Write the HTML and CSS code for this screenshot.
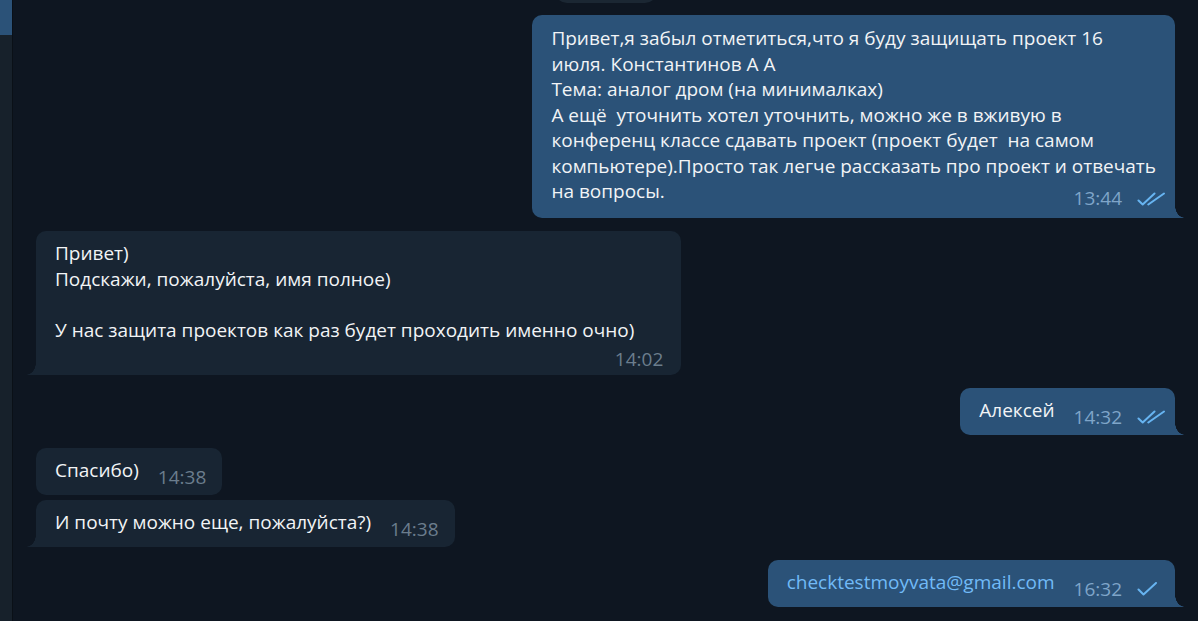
FILE: index.html
```html
<!DOCTYPE html>
<html lang="ru">
<head>
<meta charset="utf-8">
<title>Chat</title>
<link rel="stylesheet" href="styles.css">
</head>
<body>
<aside class="sidebar">
  <div class="sb-active"></div>
  <div class="sb-rest"></div>
</aside>
<main class="chat">
  <div class="messages">
    <div class="date-pill"></div>

    <div class="msg out tail long">
      <span class="text">Привет,я забыл отметиться,что я буду защищать проект 16<br>июля. Константинов А А<br>Тема: аналог дром (на минималках)<br>А ещё&nbsp; уточнить хотел уточнить, можно же в вживую в<br>конференц классе сдавать проект (проект будет&nbsp; на самом<br>компьютере).Просто так легче рассказать про проект и отвечать<br>на вопросы.</span>
      <span class="meta"><span class="time">13:44</span><svg class="check" viewBox="0 0 28 14" width="28" height="14"><path d="M1.5 8.5 L5.7 12.5 L17.5 1.5 M11.3 12.5 L27 1.5" /></svg></span>
    </div>

    <div class="msg in tail wide">
      <span class="text">Привет)<br>Подскажи, пожалуйста, имя полное)<br><br>У нас защита проектов как раз будет проходить именно очно)</span>
      <span class="meta row"><span class="time">14:02</span></span>
    </div>

    <div class="msg out tail">
      <span class="text">Алексей</span>
      <span class="meta"><span class="time">14:32</span><svg class="check" viewBox="0 0 28 14" width="28" height="14"><path d="M1.5 8.5 L5.7 12.5 L17.5 1.5 M11.3 12.5 L27 1.5" /></svg></span>
    </div>

    <div class="msg in">
      <span class="text">Спасибо)</span>
      <span class="meta"><span class="time">14:38</span></span>
    </div>

    <div class="msg in tail grouped">
      <span class="text">И почту можно еще, пожалуйста?)</span>
      <span class="meta"><span class="time">14:38</span></span>
    </div>

    <div class="msg out tail">
      <span class="text link">checktestmoyvata@gmail.com</span>
      <span class="meta"><span class="time">16:32</span><svg class="check" viewBox="0 0 28 14" width="28" height="14"><path d="M1.5 7.5 L6.5 12.5 L19 1" /></svg></span>
    </div>
  </div>
</main>
</body>
</html>
```

FILE: styles.css
```css
* { box-sizing: border-box; }

html, body {
  margin: 0;
  height: 100%;
}

body {
  display: flex;
  background: #0e1621;
  font-family: "Open Sans", "Noto Sans", sans-serif;
  color: #f2f4f6;
  overflow: hidden;
}

.sidebar {
  width: 13px;
  flex: none;
  display: flex;
  flex-direction: column;
  border-right: 1px solid #0a1017;
}

.sb-active {
  height: 35px;
  background: #2b5278;
}

.sb-rest {
  flex: 1;
  background: #17212b;
}

.chat {
  flex: 1;
  min-width: 0;
}

.messages {
  display: flex;
  flex-direction: column;
  padding: 0 23px 0 23px;
}

.date-pill {
  align-self: center;
  width: 102px;
  height: 24px;
  margin-top: -21px;
  margin-bottom: -1px;
  border-radius: 12px;
  background: #1b2733;
}

.msg {
  position: relative;
  display: flow-root;
  margin-top: 13px;
  padding: 10px 19px 4.5px 19px;
  border-radius: 10px;
  font-size: 19px;
  line-height: 25.5px;
}

.msg.grouped {
  margin-top: 5px;
}

.msg.long {
  padding-top: 11px;
  padding-bottom: 6.5px;
}

.msg.wide {
  padding-right: 47px;
}

.out {
  align-self: flex-end;
  background: #2b5278;
}

.in {
  align-self: flex-start;
  background: #182533;
}

.text {
  white-space: nowrap;
}

.link {
  color: #71baf7;
}

.meta {
  float: right;
  display: flex;
  align-items: center;
  gap: 15px;
  margin-top: 7px;
  margin-left: 19px;
  height: 25.5px;
}

.out .meta {
  margin-right: -9px;
}

.in .meta {
  margin-right: -3px;
}

.meta.row {
  float: none;
  justify-content: flex-end;
  margin: 3.5px -29px -2px 0;
}

.time {
  font-size: 19px;
  color: #7fa5c9;
}

.in .time {
  color: #6b7d8d;
}

.check {
  display: block;
  fill: none;
  stroke: #67b4f1;
  stroke-width: 2;
  stroke-linecap: round;
  stroke-linejoin: round;
}

/* bubble tails */
.out.tail {
  border-bottom-right-radius: 0;
}

.in.tail {
  border-bottom-left-radius: 0;
}

.out.tail::after,
.in.tail::after {
  content: "";
  position: absolute;
  bottom: 0;
  width: 10px;
  height: 12px;
}

.out.tail::after {
  right: -10px;
  background: radial-gradient(ellipse 10px 12px at 100% 0, transparent 96%, #2b5278 100%);
}

.in.tail::after {
  left: -10px;
  background: radial-gradient(ellipse 10px 12px at 0 0, transparent 96%, #182533 100%);
}
```
